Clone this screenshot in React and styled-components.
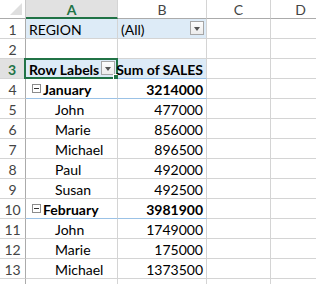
import React from 'react';
import styled, { createGlobalStyle, css } from 'styled-components';

const GlobalStyle = createGlobalStyle`
	html, body {
		margin: 0;
		padding: 0;
		background: #fff;
		overflow: hidden;
	}
	body {
		font-family: Lato, "Liberation Sans", sans-serif;
	}
`;

const GREEN = '#217346';

const Sheet = styled.div`
	display: grid;
	grid-template-columns: 26px 92px 89px 64px 60px;
	grid-template-rows: 19px repeat(14, 20px);
	width: 316px;
	height: 284px;
	overflow: hidden;
	font-size: 14px;
	color: #000;
`;

const Corner = styled.div`
	position: relative;
	background: #fff;
	border-right: 1px solid #c8c8c8;
	border-bottom: 1px solid #ababab;
	&::after {
		content: '';
		position: absolute;
		right: 3px;
		bottom: 3px;
		width: 0;
		height: 0;
		border-left: 12px solid transparent;
		border-bottom: 12px solid #dfdfdf;
	}
`;

const ColHead = styled.div`
	display: flex;
	align-items: center;
	justify-content: center;
	box-sizing: border-box;
	background: ${p => (p.active ? '#e1e1e1' : '#fff')};
	color: ${p => (p.active ? GREEN : '#444')};
	font-weight: ${p => (p.active ? 700 : 400)};
	border-right: 1px solid #d4d4d4;
	border-bottom: ${p => (p.active ? `2px solid ${GREEN}` : '1px solid #ababab')};
	padding-top: 1px;
`;

const RowHead = styled.div`
	display: flex;
	align-items: center;
	justify-content: center;
	box-sizing: border-box;
	background: ${p => (p.active ? '#e1e1e1' : '#fff')};
	color: ${p => (p.active ? GREEN : '#444')};
	font-weight: ${p => (p.active ? 700 : 400)};
	border-right: ${p => (p.active ? `2px solid ${GREEN}` : '1px solid #ababab')};
	border-bottom: 1px solid #d4d4d4;
	padding-top: 2px;
`;

const Cell = styled.div`
	position: relative;
	display: flex;
	align-items: center;
	box-sizing: border-box;
	padding: 2px 3px 0 ${p => p.indent || 3}px;
	white-space: nowrap;
	border-right: 1px solid #d4d4d4;
	border-bottom: 1px solid ${p => (p.group ? '#9bc2e6' : '#d4d4d4')};
	background: ${p => (p.fill ? '#ddebf7' : '#fff')};
	font-weight: ${p => (p.bold ? 700 : 400)};
	justify-content: ${p => (p.num ? 'flex-end' : 'flex-start')};
	${p =>
		p.merged &&
		css`
			border-right-color: ${p.fill ? '#ddebf7' : '#d4d4d4'};
		`}
`;

const ActiveFrame = styled.div`
	position: absolute;
	left: -2px;
	top: -1px;
	right: -1px;
	bottom: -1px;
	border: 2px solid ${GREEN};
	pointer-events: none;
	&::after {
		content: '';
		position: absolute;
		right: -4px;
		bottom: -4px;
		width: 5px;
		height: 5px;
		background: ${GREEN};
		border: 1px solid #fff;
	}
`;

const DropButton = styled.span`
	position: absolute;
	right: ${p => p.right}px;
	top: 2px;
	width: 14px;
	height: 14px;
	box-sizing: border-box;
	border: 1px solid #a6a6a6;
	background: linear-gradient(#fdfdfd, #ececec);
	display: flex;
	align-items: center;
	justify-content: center;
	&::before {
		content: '';
		width: 0;
		height: 0;
		border-left: 3.5px solid transparent;
		border-right: 3.5px solid transparent;
		border-top: 4px solid #555;
		margin-top: 1px;
	}
`;

const Collapse = styled.span`
	display: inline-flex;
	align-items: center;
	justify-content: center;
	width: 9px;
	height: 9px;
	box-sizing: border-box;
	border: 1px solid #8c8c8c;
	background: #fff;
	margin-right: 2px;
	margin-top: -2px;
	&::before {
		content: '';
		width: 5px;
		height: 1px;
		background: #333;
	}
`;

const rows = [
	{ type: 'item', label: 'John', value: '477000' },
	{ type: 'item', label: 'Marie', value: '856000' },
	{ type: 'item', label: 'Michael', value: '896500' },
	{ type: 'item', label: 'Paul', value: '492000' },
	{ type: 'item', label: 'Susan', value: '492500' },
	{ type: 'group', label: 'February', value: '3981900' },
	{ type: 'item', label: 'John', value: '1749000' },
	{ type: 'item', label: 'Marie', value: '175000' },
	{ type: 'item', label: 'Michael', value: '1373500' },
];

const Empty = () => (
	<>
		<Cell />
		<Cell />
	</>
);

const App = () => (
	<>
		<GlobalStyle />
		<Sheet>
			<Corner />
			<ColHead active>A</ColHead>
			<ColHead>B</ColHead>
			<ColHead>C</ColHead>
			<ColHead>D</ColHead>

			<RowHead>1</RowHead>
			<Cell fill>REGION</Cell>
			<Cell fill>
				(All)
				<DropButton right={2} />
			</Cell>
			<Empty />

			<RowHead>2</RowHead>
			<Cell />
			<Cell />
			<Empty />

			<RowHead active>3</RowHead>
			<Cell fill bold group>
				Row Labels
				<DropButton right={2} />
				<ActiveFrame />
			</Cell>
			<Cell fill bold group num>
				Sum of SALES
			</Cell>
			<Empty />

			<RowHead>4</RowHead>
			<Cell bold group indent={6}>
				<Collapse />
				January
			</Cell>
			<Cell bold group num>
				3214000
			</Cell>
			<Empty />

			{rows.map((r, i) => (
				<React.Fragment key={i}>
					<RowHead>{i + 5}</RowHead>
					{r.type === 'group' ? (
						<Cell bold group indent={6}>
							<Collapse />
							{r.label}
						</Cell>
					) : (
						<Cell indent={29}>{r.label}</Cell>
					)}
					<Cell num bold={r.type === 'group'} group={r.type === 'group'}>
						{r.value}
					</Cell>
					<Empty />
				</React.Fragment>
			))}

			{/* row 14 is only a sliver at the bottom edge */}
			<RowHead />
			<Cell />
			<Cell />
			<Empty />
		</Sheet>
	</>
);

export default App;
